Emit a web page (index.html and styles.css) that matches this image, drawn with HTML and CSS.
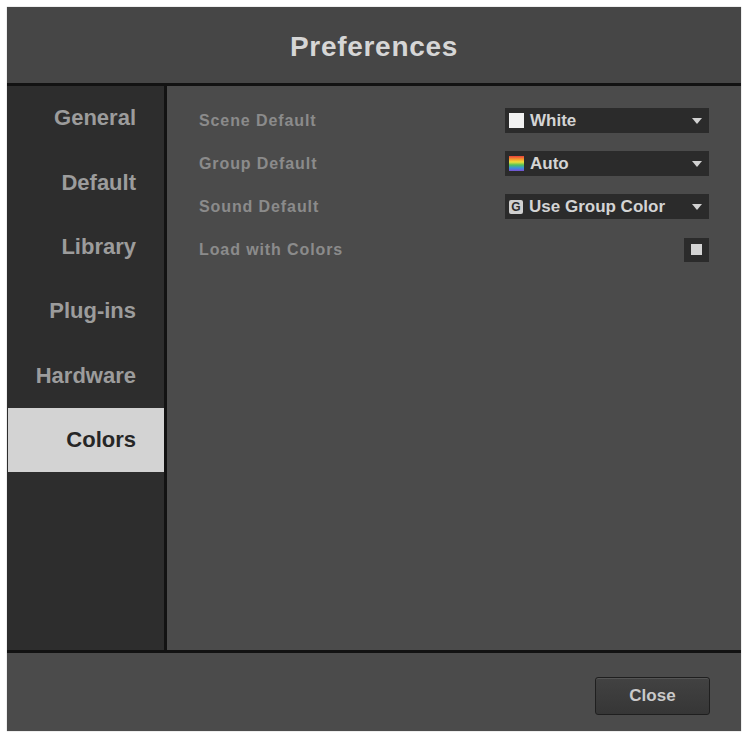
FILE: index.html
```html
<!DOCTYPE html>
<html>
<head>
<meta charset="utf-8">
<link rel="stylesheet" href="styles.css">
</head>
<body>
<div class="dialog">
  <div class="header"><h1 class="title">Preferences</h1></div>
  <div class="main">
    <nav class="sidebar">
      <div class="nav-item">General</div>
      <div class="nav-item">Default</div>
      <div class="nav-item">Library</div>
      <div class="nav-item">Plug-ins</div>
      <div class="nav-item">Hardware</div>
      <div class="nav-item selected">Colors</div>
    </nav>
    <section class="content">
      <div class="row">
        <span class="label">Scene Default</span>
        <div class="select">
          <span class="swatch swatch-white"></span>
          <span class="select-text">White</span>
          <span class="arrow"></span>
        </div>
      </div>
      <div class="row">
        <span class="label">Group Default</span>
        <div class="select">
          <span class="swatch swatch-rainbow"></span>
          <span class="select-text">Auto</span>
          <span class="arrow"></span>
        </div>
      </div>
      <div class="row">
        <span class="label">Sound Default</span>
        <div class="select">
          <span class="swatch swatch-g">G</span>
          <span class="select-text">Use Group Color</span>
          <span class="arrow"></span>
        </div>
      </div>
      <div class="row">
        <span class="label">Load with Colors</span>
        <div class="checkbox"><span class="check-mark"></span></div>
      </div>
    </section>
  </div>
  <div class="footer">
    <button class="btn">Close</button>
  </div>
</div>
</body>
</html>
```

FILE: styles.css
```css
html, body {
  margin: 0;
  background: #ffffff;
}
body {
  padding: 7px 2px 4px 7px;
  font-family: "Liberation Sans", Arial, sans-serif;
}
.dialog {
  width: 734px;
  height: 724px;
  display: flex;
  flex-direction: column;
  background: #4a4a4a;
  box-shadow: 0 0 1px #9a9a9a;
}
.header {
  height: 76px;
  flex: none;
  background: #464646;
  border-bottom: 3px solid #121212;
  display: flex;
  align-items: center;
  justify-content: center;
}
.title {
  margin: 0;
  padding-top: 4px;
  font-size: 28px;
  font-weight: bold;
  color: #d6d6d6;
  letter-spacing: 0.7px;
}
.main {
  flex: 1;
  display: flex;
  border-bottom: 3px solid #121212;
  min-height: 0;
}
.sidebar {
  width: 157px;
  flex: none;
  background: #2d2d2d;
  border-right: 3px solid #121212;
  display: flex;
  flex-direction: column;
}
.nav-item {
  height: 64.4px;
  flex: none;
  display: flex;
  align-items: center;
  justify-content: flex-end;
  padding-right: 28px;
  font-size: 22px;
  font-weight: bold;
  color: #9c9c9c;
}
.nav-item.selected {
  background: #d3d3d3;
  color: #262626;
  margin-left: 1px;
}
.content {
  flex: 1;
  background: #4b4b4b;
  padding: 22px 32px 0 32px;
  display: flex;
  flex-direction: column;
  gap: 18px;
}
.row {
  height: 25px;
  flex: none;
  display: flex;
  align-items: center;
  justify-content: space-between;
}
.label {
  font-size: 16px;
  font-weight: bold;
  color: #8b8b8b;
  letter-spacing: 0.9px;
}
.select {
  width: 204px;
  height: 25px;
  background: #2b2b2b;
  display: flex;
  align-items: center;
  padding: 0 7px 0 4px;
  box-sizing: border-box;
  gap: 6px;
}
.select-text {
  flex: 1;
  font-size: 17px;
  font-weight: bold;
  color: #d4d4d4;
}
.swatch {
  width: 15px;
  height: 15px;
  flex: none;
}
.swatch-white {
  background: #f2f2f2;
}
.swatch-rainbow {
  background: linear-gradient(to bottom, #e8403a 0%, #f29a2e 22%, #ece13a 40%, #4fc25a 60%, #3a8ee0 80%, #7a4fd0 100%);
}
.swatch-g {
  background: #d0d0d0;
  color: #2b2b2b;
  font-size: 12px;
  font-weight: bold;
  line-height: 15px;
  text-align: center;
  width: 14px;
  height: 14px;
  border-radius: 2px;
}
.arrow {
  width: 0;
  height: 0;
  border-left: 5.5px solid transparent;
  border-right: 5.5px solid transparent;
  border-top: 6px solid #d2d2d2;
  flex: none;
}
.checkbox {
  width: 25px;
  height: 24px;
  background: #2b2b2b;
  display: flex;
  align-items: center;
  justify-content: center;
}
.check-mark {
  width: 11px;
  height: 11px;
  background: #d4d4d4;
}
.footer {
  height: 78px;
  flex: none;
  box-sizing: border-box;
  background: #4b4b4b;
  display: flex;
  justify-content: flex-end;
  align-items: flex-start;
  padding: 24px 31px 0 0;
}
.btn {
  width: 115px;
  height: 38px;
  background: linear-gradient(to bottom, #424242, #363636);
  border: 1px solid #1f1f1f;
  border-radius: 3px;
  box-shadow: inset 0 1px 0 #555;
  font-family: "Liberation Sans", Arial, sans-serif;
  font-size: 17px;
  font-weight: bold;
  color: #cacaca;
  padding: 0;
}
```
